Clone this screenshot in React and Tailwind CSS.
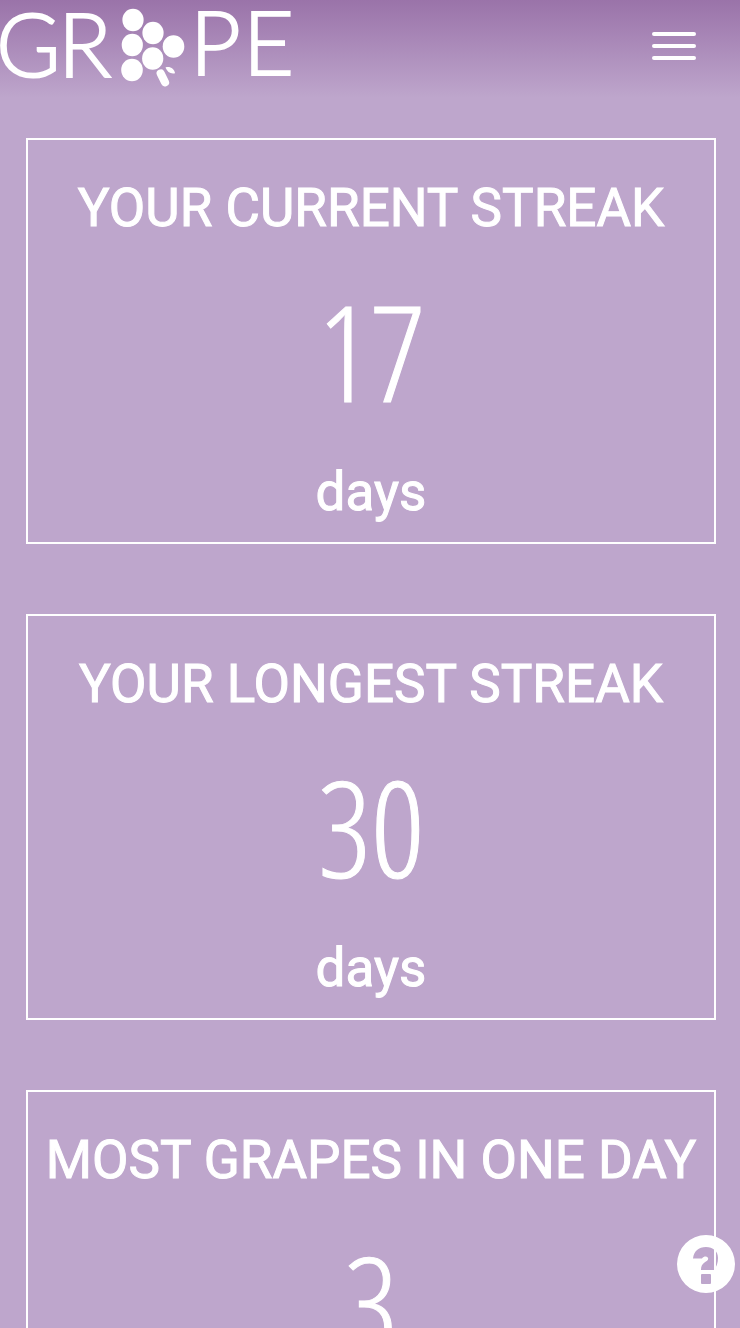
const STATS = [
  { title: "YOUR CURRENT STREAK", value: 17, unit: "days" },
  { title: "YOUR LONGEST STREAK", value: 30, unit: "days" },
  { title: "MOST GRAPES IN ONE DAY", value: 3, unit: "grapes" },
];

function Logo() {
  return (
    <svg
      viewBox="0 0 292 92"
      className="h-[92px] w-[292px] overflow-visible"
      role="img"
      aria-label="Grape"
      fill="white"
    >
      <g
        className="font-['Lato',sans-serif] text-[88px] font-light"
        stroke="white"
        strokeWidth="2"
      >
        <text x="-4" y="77">G</text>
        <text x="58" y="77">R</text>
        <text x="190" y="75">P</text>
        <text x="243" y="75">E</text>
      </g>
      <ellipse cx="133" cy="20" rx="10.600" ry="11.200" />
      <ellipse cx="153" cy="33" rx="10.600" ry="11.200" />
      <ellipse cx="132.300" cy="45" rx="10.600" ry="11.200" />
      <ellipse cx="173.500" cy="46.500" rx="10.800" ry="11.200" />
      <ellipse cx="152.700" cy="58.500" rx="10.600" ry="11.200" />
      <ellipse cx="132" cy="70" rx="10.800" ry="11.200" />
      <path d="M160.700 73.500 L165 82.300" stroke="white" strokeWidth="8.200" strokeLinecap="round" />
      <path d="M165.500 67.500 C170 66 174.500 69 175 73.300 C170.500 74.300 167.300 72 165.500 67.500 Z" />
    </svg>
  );
}

function StatCard({ title, value, unit }) {
  return (
    <section className="flex flex-col items-center border-2 border-white pt-8 pb-[18px] text-center">
      <h2 className="text-[53px] leading-[72px] font-normal whitespace-nowrap [-webkit-text-stroke:1px_white]">
        {title}
      </h2>
      <p className="pt-[14px] pb-[18px] font-['Open_Sans_Condensed_Light','Open_Sans_Condensed','Open_Sans',sans-serif] text-[134px] leading-[184px] font-light [-webkit-text-stroke:1px_white]">
        {value}
      </p>
      <p className="text-[53px] leading-[64px] font-normal [-webkit-text-stroke:1px_white]">{unit}</p>
    </section>
  );
}

export default function App() {
  return (
    <div className="h-screen overflow-hidden bg-[#bea6cc] font-['Roboto',sans-serif] text-white">
      <header className="flex items-start justify-between bg-linear-to-b from-[#9a73a9] to-[#bea6cc] pr-11 pb-1.5">
        <a href="#home">
          <Logo />
        </a>
        <button type="button" aria-label="Menu" className="mt-8 flex w-11 flex-col gap-2">
          <span className="h-1 w-full rounded-xs bg-white" />
          <span className="h-1 w-full rounded-xs bg-white" />
          <span className="h-1 w-full rounded-xs bg-white" />
        </button>
      </header>
      <main className="flex flex-col gap-[70px] pt-10 pr-6 pl-[26px]">
        {STATS.map((stat) => (
          <StatCard key={stat.title} {...stat} />
        ))}
      </main>
      <button type="button" aria-label="Help" className="fixed right-[5px] bottom-[35px]">
        <svg viewBox="0 0 58 58" className="size-[58px]" fill="white">
          <path
            fillRule="evenodd"
            d="M29 0a29 29 0 1 1 0 58a29 29 0 1 1 0-58Z M16 23.500H25C26 22 27.200 21.500 28.700 21.500C30.200 21.500 31.200 22.500 31.200 23.800C31.200 25.500 29.500 26 27.500 27.500C25 29.300 24 31.500 24 35H37C39.500 32 41 28 41 23C41 16 36 12 29 12C21.500 12 17 16 16 23.500Z M25 39H33Q34 39 34 40V48Q34 49 33 49H25Q24 49 24 48V40Q24 39 25 39Z"
          />
        </svg>
      </button>
    </div>
  );
}
